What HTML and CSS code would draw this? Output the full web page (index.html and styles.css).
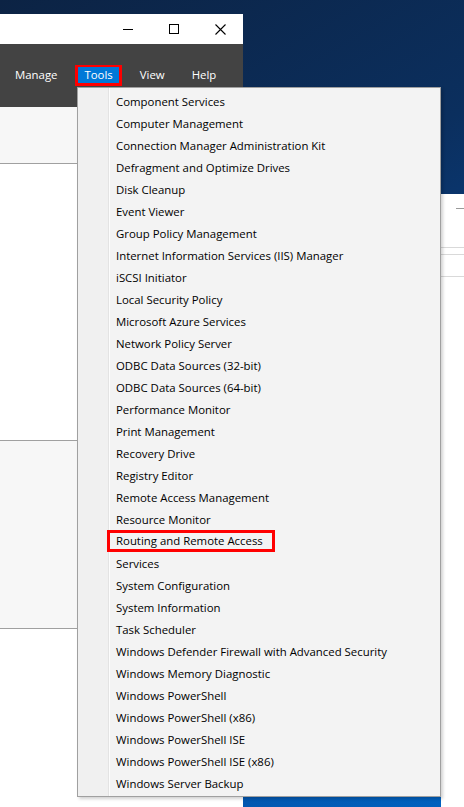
FILE: index.html
```html
<!DOCTYPE html>
<html lang="en">
<head>
  <meta charset="UTF-8">
  <meta name="viewport" content="width=device-width, initial-scale=1">
  <title>Server Manager - Tools</title>
  <link rel="stylesheet" href="styles.css">
</head>
<body>
  <div class="desktop">

    <div class="window main-window">
      <div class="titlebar">
        <span class="caption-btn">
          <svg width="10" height="10" viewBox="0 0 10 10"><path d="M0 5.5h10" stroke="#000" stroke-width="1"/></svg>
        </span>
        <span class="caption-btn">
          <svg width="10" height="10" viewBox="0 0 10 10"><rect x="0.5" y="0.5" width="9" height="9" fill="none" stroke="#000" stroke-width="1"/></svg>
        </span>
        <span class="caption-btn">
          <svg width="11" height="11" viewBox="0 0 11 11"><path d="M0.5 0.5l10 10M10.5 0.5l-10 10" stroke="#000" stroke-width="1.1"/></svg>
        </span>
      </div>
      <div class="menubar">
        <span class="menubar-item">Manage</span>
        <span class="menubar-item active">Tools</span>
        <span class="menubar-item">View</span>
        <span class="menubar-item">Help</span>
      </div>
      <div class="pane pane-light pane-header"></div>
      <div class="pane pane-white pane-tall"></div>
      <div class="pane pane-light pane-mid"></div>
      <div class="pane pane-white pane-fill"></div>
    </div>

    <div class="window side-window">
      <div class="side-top">
        <span class="side-dash"></span>
      </div>
      <div class="side-row"></div>
      <div class="side-row side-row-wide"></div>
    </div>

    <ul class="dropdown">
      <li class="dropdown-item">Component Services</li>
      <li class="dropdown-item">Computer Management</li>
      <li class="dropdown-item">Connection Manager Administration Kit</li>
      <li class="dropdown-item">Defragment and Optimize Drives</li>
      <li class="dropdown-item">Disk Cleanup</li>
      <li class="dropdown-item">Event Viewer</li>
      <li class="dropdown-item">Group Policy Management</li>
      <li class="dropdown-item">Internet Information Services (IIS) Manager</li>
      <li class="dropdown-item">iSCSI Initiator</li>
      <li class="dropdown-item">Local Security Policy</li>
      <li class="dropdown-item">Microsoft Azure Services</li>
      <li class="dropdown-item">Network Policy Server</li>
      <li class="dropdown-item">ODBC Data Sources (32-bit)</li>
      <li class="dropdown-item">ODBC Data Sources (64-bit)</li>
      <li class="dropdown-item">Performance Monitor</li>
      <li class="dropdown-item">Print Management</li>
      <li class="dropdown-item">Recovery Drive</li>
      <li class="dropdown-item">Registry Editor</li>
      <li class="dropdown-item">Remote Access Management</li>
      <li class="dropdown-item">Resource Monitor</li>
      <li class="dropdown-item"><span class="marked">Routing and Remote Access</span></li>
      <li class="dropdown-item">Services</li>
      <li class="dropdown-item">System Configuration</li>
      <li class="dropdown-item">System Information</li>
      <li class="dropdown-item">Task Scheduler</li>
      <li class="dropdown-item">Windows Defender Firewall with Advanced Security</li>
      <li class="dropdown-item">Windows Memory Diagnostic</li>
      <li class="dropdown-item">Windows PowerShell</li>
      <li class="dropdown-item">Windows PowerShell (x86)</li>
      <li class="dropdown-item">Windows PowerShell ISE</li>
      <li class="dropdown-item">Windows PowerShell ISE (x86)</li>
      <li class="dropdown-item">Windows Server Backup</li>
    </ul>

  </div>
</body>
</html>
```

FILE: styles.css
```css
* {
  margin: 0;
  padding: 0;
  box-sizing: border-box;
}
body {
  font-family: 'Open Sans', 'Noto Sans', sans-serif;
  font-size: 11.4px;
  width: 464px;
  height: 807px;
  overflow: hidden;
}
.desktop {
  position: relative;
  width: 464px;
  height: 807px;
  background: linear-gradient(150deg, #0c2344 0%, #0b2f5e 35%, #06489a 70%, #0062c0 100%);
}
.window {
  position: absolute;
  display: flex;
  flex-direction: column;
}
.main-window {
  left: 0;
  top: 14px;
  width: 243px;
  bottom: 0;
  background: #fff;
}
.titlebar {
  height: 30px;
  display: flex;
  justify-content: flex-end;
  background: #fff;
}
.caption-btn {
  width: 46px;
  height: 30px;
  display: flex;
  align-items: center;
  justify-content: center;
}
.menubar {
  height: 63px;
  background: #434343;
  display: flex;
  align-items: flex-start;
  gap: 9px;
  padding: 21px 0 0 6px;
}
.menubar-item {
  color: #fff;
  line-height: 16px;
  padding: 0 6px;
  border: solid transparent;
  border-width: 2px 3px 3px;
}
.menubar-item.active {
  background: #0078d7;
  border-color: #ff0000;
}
.pane {
  flex: none;
}
.pane-header {
  height: 57px;
  border-bottom: 1px solid #a0a0a0;
}
.pane-tall {
  height: 277px;
  border-bottom: 1px solid #a0a0a0;
}
.pane-mid {
  height: 188px;
  border-bottom: 1px solid #a0a0a0;
}
.pane-light {
  background: #f7f7f7;
}
.pane-white {
  background: #fff;
}
.pane-fill {
  flex: 1;
}
.side-window {
  left: 441px;
  top: 194px;
  right: 0;
  bottom: 0;
  background: #fff;
}
.side-top {
  height: 54px;
  position: relative;
  border-bottom: 1px solid #d9d9d9;
}
.side-dash {
  position: absolute;
  left: 15px;
  top: 14px;
  width: 20px;
  height: 1px;
  background: #9a9a9a;
}
.side-row {
  height: 7px;
  border-bottom: 1px solid #d9d9d9;
}
.side-row-wide {
  height: 22px;
}
.dropdown {
  position: absolute;
  left: 77px;
  top: 87px;
  width: 364px;
  list-style: none;
  padding: 2px;
  border: 1px solid #a0a0a0;
  background: linear-gradient(to right, #f0f0f0 0, #f0f0f0 30px, #e3e3e3 30px, #e3e3e3 31px, #fcfcfc 31px, #fcfcfc 32px, #f3f3f3 32px);
  box-shadow: 2px 2px 3px rgba(0, 0, 0, 0.18);
}
.dropdown-item {
  height: 22px;
  display: flex;
  align-items: center;
  padding-left: 36px;
  color: #000;
  white-space: nowrap;
}
.marked {
  display: inline-block;
  line-height: 16px;
  border: 3px solid #ff0000;
  padding: 0 9px 0 6px;
  margin-left: -9px;
}
```
